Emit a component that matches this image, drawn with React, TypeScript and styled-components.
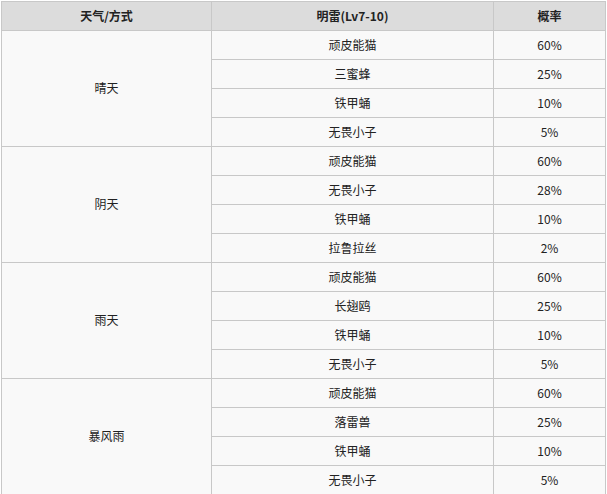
import styled, { createGlobalStyle } from "styled-components";

const GlobalStyle = createGlobalStyle`
  body {
    margin: 0;
    background: #ffffff;
    font-family: "Noto Sans CJK SC", "Noto Sans", sans-serif;
  }
`;

const Page = styled.div`
  padding: 1px 0 0 1px;
`;

const Table = styled.table`
  width: 605px;
  border-collapse: separate;
  border-spacing: 0;
  border-top: 1px solid #c8c8c8;
  border-left: 1px solid #c8c8c8;
  table-layout: fixed;
  font-size: 12px;
  line-height: 16px;
  color: #222;
`;

const HeadCell = styled.th`
  height: 27px;
  padding: 0 0 1px;
  background: #dcdcdc;
  border-right: 1px solid #c8c8c8;
  border-bottom: 1px solid #c8c8c8;
  font-weight: 700;
  text-align: center;
  vertical-align: middle;
`;

const Cell = styled.td`
  height: 27px;
  padding: 0 0 1px;
  background: #f9f9f9;
  border-right: 1px solid #c8c8c8;
  border-bottom: 1px solid #c8c8c8;
  text-align: center;
  vertical-align: middle;
`;

type Row = { name: string; rate: string };
type Group = { weather: string; rows: Row[] };

const groups: Group[] = [
  {
    weather: "晴天",
    rows: [
      { name: "顽皮能猫", rate: "60%" },
      { name: "三蜜蜂", rate: "25%" },
      { name: "铁甲蛹", rate: "10%" },
      { name: "无畏小子", rate: "5%" },
    ],
  },
  {
    weather: "阴天",
    rows: [
      { name: "顽皮能猫", rate: "60%" },
      { name: "无畏小子", rate: "28%" },
      { name: "铁甲蛹", rate: "10%" },
      { name: "拉鲁拉丝", rate: "2%" },
    ],
  },
  {
    weather: "雨天",
    rows: [
      { name: "顽皮能猫", rate: "60%" },
      { name: "长翅鸥", rate: "25%" },
      { name: "铁甲蛹", rate: "10%" },
      { name: "无畏小子", rate: "5%" },
    ],
  },
  {
    weather: "暴风雨",
    rows: [
      { name: "顽皮能猫", rate: "60%" },
      { name: "落雷兽", rate: "25%" },
      { name: "铁甲蛹", rate: "10%" },
      { name: "无畏小子", rate: "5%" },
    ],
  },
];

export default function App() {
  return (
    <Page>
      <GlobalStyle />
      <Table>
        <colgroup>
          <col style={{ width: 210 }} />
          <col style={{ width: 282 }} />
          <col style={{ width: 112 }} />
        </colgroup>
        <thead>
          <tr>
            <HeadCell>天气/方式</HeadCell>
            <HeadCell>明雷(Lv7-10)</HeadCell>
            <HeadCell>概率</HeadCell>
          </tr>
        </thead>
        <tbody>
          {groups.map((g) =>
            g.rows.map((r, i) => (
              <tr key={g.weather + i}>
                {i === 0 && <Cell rowSpan={g.rows.length}>{g.weather}</Cell>}
                <Cell>{r.name}</Cell>
                <Cell>{r.rate}</Cell>
              </tr>
            ))
          )}
        </tbody>
      </Table>
    </Page>
  );
}
